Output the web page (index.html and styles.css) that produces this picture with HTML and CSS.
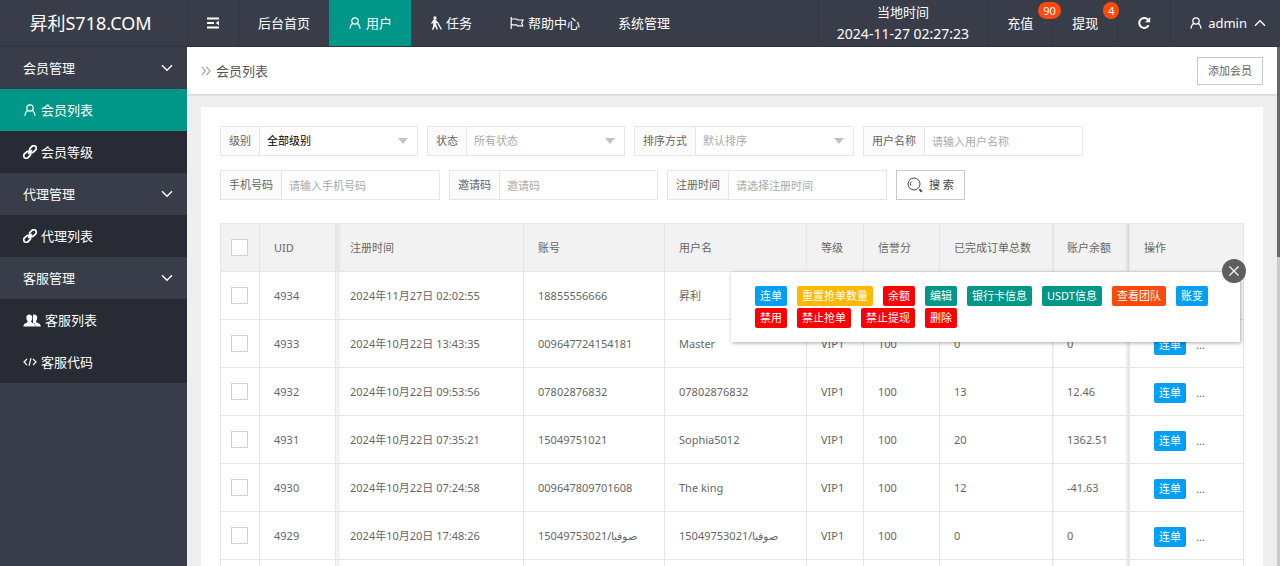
FILE: index.html
```html
<!DOCTYPE html>
<html lang="zh-CN">
<head>
<meta charset="utf-8">
<meta name="viewport" content="width=device-width, initial-scale=1">
<title>会员列表</title>
<link rel="stylesheet" href="styles.css">
</head>
<body>
<svg class="sprite" aria-hidden="true">
  <symbol id="i-user" viewBox="0 0 14 14"><circle cx="7" cy="5" r="3.2"/><path d="M5 7.400C3.200 8.200 2.200 10 2 12.800M9 7.400c1.800.8 2.800 2.600 3 5.400"/></symbol>
  <symbol id="i-link" viewBox="0 0 14 14"><rect x="6.2" y="1.6" width="7.4" height="5" rx="2.5" transform="rotate(-45 9.9 4.1)"/><rect x="0.4" y="7.4" width="7.4" height="5" rx="2.5" transform="rotate(-45 4.1 9.9)"/><path d="M5.2 8.8l3.6-3.6"/></symbol>
  <symbol id="i-chevron" viewBox="0 0 12 8"><path d="M1 1.2l5 5 5-5"/></symbol>
  <symbol id="i-code" viewBox="0 0 14 14"><path d="M4 4L1 7l3 3M10 4l3 3-3 3M8 3.2L6 10.8"/></symbol>
</svg>
<header class="topbar">
  <h1 class="logo">昇利S718.COM</h1>
  <button class="cell toggle" type="button" aria-label="收起菜单">
    <svg class="icon" viewBox="0 0 14 14"><path class="thick" d="M1 2.500h12M1 7h7M1 11.500h12"/><path class="solid" d="M13 4.800v4.400L9.600 7z"/></svg>
  </button>
  <nav class="nav">
    <a href="#">后台首页</a>
    <a class="active" href="#"><svg class="icon"><use href="#i-user"/></svg>用户</a>
    <a href="#"><svg class="icon slim" viewBox="0 0 12 14"><circle class="solid" cx="5" cy="1.9" r="1.6"/><path class="solid" d="M3.600 3.600h2.600l.6 2 2 1.200-.5.9-2.100-1 .2 2.300 1.600 4.600H6.600L5 10l-1.600 3.800H2l1.300-4.600L3.300 6.600 2.200 7.800 1 7.400z"/><path d="M8 7.400l3.400 6"/></svg>任务</a>
    <a href="#"><svg class="icon" viewBox="0 0 14 14"><path d="M1.200 1v12M1.200 3h5.300l1.200 1h5.400l-1.400 3 1 2.800H7.600l-1.200-1H1.200"/></svg>帮助中心</a>
    <a href="#">系统管理</a>
  </nav>
  <div class="cell clock"><span>当地时间</span><time datetime="2024-11-27T02:27:23">2024-11-27 02:27:23</time></div>
  <a class="cell" href="#">充值<span class="badge">90</span></a>
  <a class="cell" href="#">提现<span class="badge">4</span></a>
  <button class="cell refresh" type="button" aria-label="刷新">
    <svg class="icon" viewBox="0 0 14 14"><path class="heavy" d="M11.600 9.300a5 5 0 1 1-.6-5.600"/><path class="solid" d="M13.200 1v5.200H8z"/></svg>
  </button>
  <button class="cell account" type="button"><svg class="icon"><use href="#i-user"/></svg><span>admin</span><svg class="icon chevron up"><use href="#i-chevron"/></svg></button>
</header>
<div class="body">
  <nav class="sidebar">
    <button class="group" type="button">会员管理<svg class="icon chevron"><use href="#i-chevron"/></svg></button>
    <a class="active" href="#"><svg class="icon"><use href="#i-user"/></svg>会员列表</a>
    <a href="#"><svg class="icon link"><use href="#i-link"/></svg>会员等级</a>
    <button class="group" type="button">代理管理<svg class="icon chevron"><use href="#i-chevron"/></svg></button>
    <a href="#"><svg class="icon link"><use href="#i-link"/></svg>代理列表</a>
    <button class="group" type="button">客服管理<svg class="icon chevron"><use href="#i-chevron"/></svg></button>
    <a href="#"><svg class="icon wide" viewBox="0 0 18 14"><path class="solid" d="M11 1c2.200 0 3.400 1.300 3.200 3.600-.1 1.500-.7 2.400-1.200 3 0 1 .3 1.300 1.600 1.800 2 .7 3 1.300 3.200 3.600h-5.200c-.2-2.200-1.200-3.100-2.600-3.700V1.200z"/><path class="solid" d="M6.200 1c2 0 3.200 1.200 3.100 3.500 0 1.500-.6 2.500-1.200 3.100 0 1 .3 1.300 1.500 1.800 1.700.7 2.500 1.400 2.600 3.600H.4c.1-2.300 1-2.900 2.800-3.600 1.200-.5 1.500-.8 1.500-1.800-.6-.6-1.300-1.600-1.300-3.100C3.300 2.200 4.300 1 6.200 1z"/></svg>客服列表</a>
    <a href="#"><svg class="icon"><use href="#i-code"/></svg>客服代码</a>
  </nav>
  <main class="main">
    <div class="crumbs">
      <svg class="icon arrow" viewBox="0 0 10 10"><path d="M1 1l3.500 4L1 9M5.500 1L9 5 5.500 9"/></svg><h2>会员列表</h2>
      <button class="btn add" type="button">添加会员</button>
    </div>
    <section class="card">
      <form class="filters">
        <div class="field"><label for="level">级别</label><span class="select"><select class="chosen" id="level"><option>全部级别</option></select></span></div>
        <div class="field"><label for="state">状态</label><span class="select"><select id="state"><option>所有状态</option></select></span></div>
        <div class="field"><label for="order">排序方式</label><span class="select"><select id="order"><option>默认排序</option></select></span></div>
        <div class="field"><label for="name">用户名称</label><input id="name" type="text" placeholder="请输入用户名称"></div>
        <div class="field"><label for="phone">手机号码</label><input id="phone" type="text" placeholder="请输入手机号码"></div>
        <div class="field"><label for="code">邀请码</label><input id="code" type="text" placeholder="邀请码"></div>
        <div class="field"><label for="reg">注册时间</label><input id="reg" type="text" placeholder="请选择注册时间"></div>
        <button class="btn search" type="button"><svg class="icon" viewBox="0 0 16 16"><circle cx="7" cy="7" r="6"/><path d="M3.800 8.600a3.600 3.600 0 0 1 .4-4"/><path class="handle" d="M12.400 12.400l2.400 2.400"/></svg>搜 索</button>
      </form>
      <div class="table-wrap">
        <table>
          <colgroup><col class="c-check"><col class="c-uid"><col class="c-time"><col class="c-acc"><col class="c-name"><col class="c-level"><col class="c-credit"><col class="c-orders"><col class="c-balance"><col class="c-ops"></colgroup>
          <thead>
            <tr><th><input type="checkbox" aria-label="全选"></th><th>UID</th><th class="after-fixed">注册时间</th><th>账号</th><th>用户名</th><th>等级</th><th>信誉分</th><th>已完成订单总数</th><th class="before-fixed">账户余额</th><th>操作</th></tr>
          </thead>
          <tbody>
            <tr><td><input type="checkbox" aria-label="4934"></td><td>4934</td><td class="after-fixed">2024年11月27日 02:02:55</td><td>18855556666</td><td>昇利</td><td></td><td></td><td></td><td class="before-fixed"></td><td></td></tr>
            <tr><td><input type="checkbox" aria-label="4933"></td><td>4933</td><td class="after-fixed">2024年10月22日 13:43:35</td><td>009647724154181</td><td>Master</td><td>VIP1</td><td>100</td><td>0</td><td class="before-fixed">0</td><td><span class="ops"><button class="tag blue" type="button">连单</button>...</span></td></tr>
            <tr><td><input type="checkbox" aria-label="4932"></td><td>4932</td><td class="after-fixed">2024年10月22日 09:53:56</td><td>07802876832</td><td>07802876832</td><td>VIP1</td><td>100</td><td>13</td><td class="before-fixed">12.46</td><td><span class="ops"><button class="tag blue" type="button">连单</button>...</span></td></tr>
            <tr><td><input type="checkbox" aria-label="4931"></td><td>4931</td><td class="after-fixed">2024年10月22日 07:35:21</td><td>15049751021</td><td>Sophia5012</td><td>VIP1</td><td>100</td><td>20</td><td class="before-fixed">1362.51</td><td><span class="ops"><button class="tag blue" type="button">连单</button>...</span></td></tr>
            <tr><td><input type="checkbox" aria-label="4930"></td><td>4930</td><td class="after-fixed">2024年10月22日 07:24:58</td><td>009647809701608</td><td>The king</td><td>VIP1</td><td>100</td><td>12</td><td class="before-fixed">-41.63</td><td><span class="ops"><button class="tag blue" type="button">连单</button>...</span></td></tr>
            <tr><td><input type="checkbox" aria-label="4929"></td><td>4929</td><td class="after-fixed">2024年10月20日 17:48:26</td><td>15049753021/صوفيا</td><td>15049753021/صوفيا</td><td>VIP1</td><td>100</td><td>0</td><td class="before-fixed">0</td><td><span class="ops"><button class="tag blue" type="button">连单</button>...</span></td></tr>
            <tr><td></td><td></td><td class="after-fixed"></td><td></td><td></td><td></td><td></td><td></td><td class="before-fixed"></td><td></td></tr>
          </tbody>
        </table>
        <div class="popup">
          <button class="tag blue" type="button">连单</button>
          <button class="tag yellow" type="button">重置抢单数量</button>
          <button class="tag red" type="button">余额</button>
          <button class="tag green" type="button">编辑</button>
          <button class="tag green" type="button">银行卡信息</button>
          <button class="tag green" type="button">USDT信息</button>
          <button class="tag orange" type="button">查看团队</button>
          <button class="tag blue" type="button">账变</button>
          <button class="tag red" type="button">禁用</button>
          <button class="tag red" type="button">禁止抢单</button>
          <button class="tag red" type="button">禁止提现</button>
          <button class="tag red" type="button">删除</button>
          <button class="close" type="button" aria-label="关闭"><svg class="icon" viewBox="0 0 12 12"><path d="M1.500 1.500l9 9M10.500 1.500l-9 9"/></svg></button>
        </div>
      </div>
    </section>
  </main>
  <div class="rail"><div class="thumb"></div></div>
</div>
</body>
</html>
```
FILE: styles.css
```css
* { box-sizing: border-box; }
body {
  margin: 0;
  height: 100vh;
  overflow: hidden;
  display: flex;
  flex-direction: column;
  background: #393d49;
  color: #666;
  font: 11px/20px "Noto Sans", "Noto Sans CJK SC", sans-serif;
}
button, input, select { margin: 0; font: inherit; color: inherit; border-radius: 0; }
button { background: none; border: 0; padding: 0; }
a { color: inherit; text-decoration: none; }
.sprite { display: none; }
.icon {
  flex: none;
  width: 14px;
  height: 14px;
  fill: none;
  stroke: currentColor;
  stroke-width: 1.2;
}
.icon .solid { fill: currentColor; stroke: none; }
.icon .thick { stroke-width: 1.8; }
.icon .heavy { stroke-width: 2; }
.icon.slim { width: 12px; }
.icon.wide { width: 18px; height: 15px; }
.icon.link { stroke-width: 1.8; }
.icon.chevron { width: 12px; height: 8px; stroke-width: 1.4; }
.icon.up { transform: rotate(180deg); }

/* Top bar */
.topbar {
  flex: none;
  display: flex;
  height: 47px;
  color: #fff;
  font-size: 13px;
  border-bottom: 1px solid #31343f;
}
.logo {
  width: 187px;
  margin: 0;
  padding-right: 6px;
  text-align: center;
  font-size: 18px;
  font-weight: 400;
  line-height: 46px;
}
.cell {
  position: relative;
  display: flex;
  align-items: center;
  padding: 0 19px;
  border-left: 1px solid #323641;
}
.toggle { padding: 0 18px; border-right: 1px solid #323641; }
.nav { flex: 1; display: flex; }
.nav a { display: flex; align-items: center; gap: 4px; padding: 0 19px; }
.nav .active, .sidebar .active { background: #009688; }
.clock {
  flex-direction: column;
  justify-content: center;
  padding: 0 18px;
  line-height: 22px;
}
.clock time { font-size: 14px; }
.badge {
  position: absolute;
  top: 2px;
  left: 50px;
  height: 17px;
  padding: 0 5px;
  border-radius: 9px;
  background: #fd4a0a;
  font-size: 11px;
  line-height: 17px;
  z-index: 1;
}
.account { gap: 5px; padding: 0 14px 0 18px; }
.account .chevron { margin-left: 2px; }

/* Side menu */
.body { flex: 1; min-height: 0; display: flex; }
.sidebar {
  flex: none;
  width: 187px;
  display: flex;
  flex-direction: column;
  color: #fff;
  font-size: 13px;
}
.sidebar a, .group {
  display: flex;
  align-items: center;
  gap: 4px;
  height: 42px;
  padding: 0 14px 0 23px;
}
.sidebar a { background: #282b33; }
.group { justify-content: space-between; }

/* Content */
.main {
  flex: 1;
  min-width: 0;
  overflow: hidden;
  display: flex;
  flex-direction: column;
  background: #eee;
}
.crumbs {
  flex: none;
  display: flex;
  align-items: center;
  gap: 5px;
  height: 47px;
  padding: 0 14px;
  background: #fff;
  box-shadow: 0 1px 2px #ccc;
}
.crumbs h2 { margin: 0; font-size: 13px; font-weight: 400; color: #555; }
.arrow { width: 10px; height: 10px; color: #aaa; }
.btn {
  display: flex;
  align-items: center;
  gap: 6px;
  border: 1px solid #c9c9c9;
  background: #fff;
}
.add { height: 28px; margin-left: auto; padding: 0 10px; }
.search { height: 30px; padding: 0 10px; color: #444; }
.search .icon { width: 16px; height: 16px; stroke-width: 1; }
.search .handle { stroke-width: 2; }
.card { flex: 1; margin: 13px 14px 0; padding: 19px; background: #fff; }
.filters { display: flex; flex-wrap: wrap; gap: 14px 9px; margin-bottom: 23px; }
.field { display: flex; height: 30px; }
.field label {
  padding: 0 8px;
  line-height: 28px;
  border: 1px solid #e6e6e6;
  border-right: 0;
  background: #fbfbfb;
}
.field input, .field select {
  width: 159px;
  height: 30px;
  padding: 0 7px;
  border: 1px solid #e6e6e6;
  background: #fff;
  appearance: none;
  color: #aaa;
}
.field .chosen { color: #000; }
.field input::placeholder { color: #aaa; opacity: 1; }
.select { position: relative; }
.select::after {
  content: "";
  position: absolute;
  right: 10px;
  top: 12px;
  border: 5px solid transparent;
  border-top: 6px solid #c2c2c2;
  border-bottom: 0;
}

/* Member table */
.table-wrap { position: relative; }
table { width: 100%; table-layout: fixed; border-collapse: collapse; }
th, td {
  height: 48px;
  padding: 0 14px;
  border: 1px solid #e6e6e6;
  text-align: left;
  font-weight: 400;
  white-space: nowrap;
}
th { background: #f2f2f2; }
th:first-child, td:first-child { padding: 0 10px; }
.after-fixed { background-image: linear-gradient(to right, rgba(0, 0, 0, 0.08), transparent 5px); }
.before-fixed { background-image: linear-gradient(to left, rgba(0, 0, 0, 0.12), transparent 5px); }
.c-check { width: 39px; }
.c-uid, .c-credit { width: 76px; }
.c-time { width: 188px; }
.c-acc { width: 141px; }
.c-name { width: 142px; }
.c-level { width: 57px; }
.c-orders { width: 113px; }
.c-balance { width: 77px; }
td input, th input {
  display: block;
  appearance: none;
  width: 17px;
  height: 17px;
  border: 1px solid #d2d2d2;
  background: #fff;
}
.ops { display: flex; align-items: center; gap: 10px; padding: 2px 0 0 10px; }
.tag {
  height: 20px;
  padding: 0 5px;
  border-radius: 2px;
  color: #fff;
  line-height: 20px;
}
.blue { background: #01a0f6; }
.yellow { background: #ffb800; }
.red { background: #f00; }
.green { background: #009688; }
.orange { background: #fd4a0a; }
.popup {
  position: absolute;
  top: 49px;
  right: 4px;
  width: 509px;
  display: flex;
  flex-wrap: wrap;
  gap: 2px 10px;
  padding: 14px 24px;
  background: #fff;
  box-shadow: 1px 1px 4px rgba(0, 0, 0, 0.35);
}
.close {
  position: absolute;
  top: -13px;
  right: -6px;
  display: grid;
  place-items: center;
  width: 24px;
  height: 24px;
  border-radius: 50%;
  background: #5f5f5f;
  color: #fff;
}
.close .icon { width: 12px; height: 12px; }

.rail { flex: none; width: 3px; background: #c9c9c9; }
.thumb { height: 210px; background: #66676b; }
```
